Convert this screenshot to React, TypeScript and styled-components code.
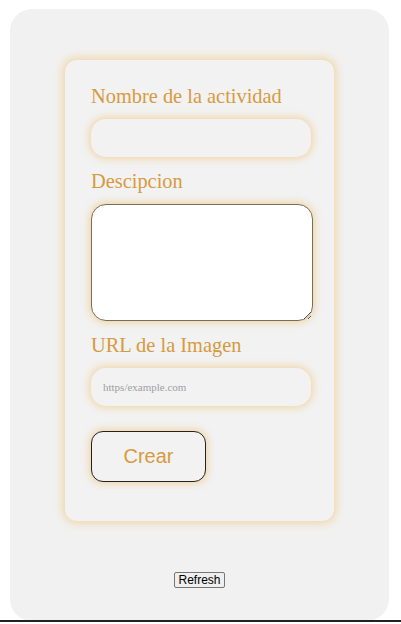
import React from "react";
import styled, { createGlobalStyle } from "styled-components";

const Global = createGlobalStyle`
  html, body { margin: 0; padding: 0; background: #ffffff; }
  body { font-family: "Liberation Serif", "Times New Roman", serif; }
`;

const Page = styled.div`
  padding: 9px 12px 0 10px;
  height: 622px;
  box-sizing: border-box;
  border-bottom: 2px solid #222222;
  overflow: hidden;
`;

const Panel = styled.div`
  background: #f1f1f1;
  border-radius: 22px;
  height: 612px;
  display: flex;
  flex-direction: column;
  align-items: center;
  padding-top: 51px;
  box-sizing: border-box;
`;

const Card = styled.form`
  width: 269px;
  box-sizing: border-box;
  background: #f2f2f2;
  border-radius: 12px;
  box-shadow: 0 0 8px 2px rgba(240, 196, 120, 0.65);
  padding: 25px 23px 39px 26px;
  display: flex;
  flex-direction: column;
  align-items: flex-start;
`;

const Label = styled.label`
  display: block;
  color: #d89a40;
  font-family: "Liberation Serif", "Times New Roman", serif;
  font-size: 20.4px;
  line-height: 22px;
  margin-bottom: 12px;
`;

const TextInput = styled.input<{ $mb?: number }>`
  width: 220px;
  height: 38px;
  box-sizing: border-box;
  border: none;
  outline: none;
  border-radius: 15px;
  background: #f2f2f2;
  box-shadow: 0 0 7px 2px rgba(240, 196, 120, 0.6);
  padding: 0 12px;
  font-family: "Liberation Serif", "Times New Roman", serif;
  font-size: 11px;
  margin-bottom: ${(p) => p.$mb ?? 13}px;
  &::placeholder { color: #a0a0a0; }
`;

const TextArea = styled.textarea`
  width: 222px;
  height: 117px;
  box-sizing: border-box;
  border: 1px solid #7a6c5c;
  border-radius: 15px;
  background: #ffffff;
  box-shadow: 0 0 7px 2px rgba(240, 196, 120, 0.6);
  margin: 0 0 13px 0;
  outline: none;
  display: block;
`;

const CreateButton = styled.button`
  width: 115px;
  height: 51px;
  box-sizing: border-box;
  border: 1px solid #222222;
  border-radius: 12px;
  background: #f2f2f2;
  color: #d89a40;
  font-family: "Liberation Sans", Arial, sans-serif;
  font-size: 20px;
  box-shadow: 0 0 7px 2px rgba(240, 196, 120, 0.6);
  cursor: pointer;
  padding: 0;
`;

const RefreshRow = styled.div`
  margin-top: 51px;
  display: flex;
  justify-content: center;
`;

const RefreshButton = styled.button`
  font-family: "Liberation Sans", Arial, sans-serif;
  font-size: 12px;
  padding: 0 3px;
  height: 16px;
  line-height: 14px;
  background: #efefef;
  border: 1px solid #767676;
  border-radius: 2px;
  color: #000;
`;

export default function App() {
  return (
    <>
      <Global />
      <Page>
        <Panel>
          <Card onSubmit={(e) => e.preventDefault()}>
            <Label>Nombre de la actividad</Label>
            <TextInput type="text" />
            <Label>Descipcion</Label>
            <TextArea />
            <Label>URL de la Imagen</Label>
            <TextInput type="text" placeholder="https/example.com" $mb={25} />
            <CreateButton type="submit">Crear</CreateButton>
          </Card>
          <RefreshRow>
            <RefreshButton type="button">Refresh</RefreshButton>
          </RefreshRow>
        </Panel>
      </Page>
    </>
  );
}
